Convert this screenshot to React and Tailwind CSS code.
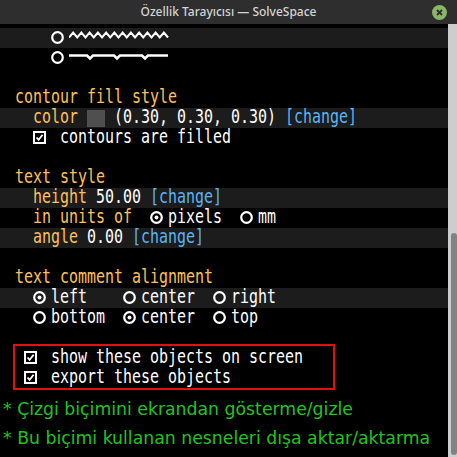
import React from "react";

const C = 9;
const OR = "text-[#ffc05a]";
const WH = "text-[#ffffff]";
const BL = "text-[#5ab4f5]";

function T({ t, c }) {
  return (
    <div className="h-[20px] shrink-0" style={{ width: t.length * C }}>
      <div
        className={`origin-left scale-x-[0.787] whitespace-pre leading-[17px] text-[19px] font-['DejaVu_Sans_Mono',monospace] ${c}`}
      >
        {t}
      </div>
    </div>
  );
}

function Sp({ n }) {
  return <div className="h-[20px] shrink-0" style={{ width: n * C }} />;
}

function Radio({ on }) {
  return (
    <div className="w-[18px] h-[20px] shrink-0 flex items-center">
      <svg width="13" height="13" viewBox="0 0 13 13" className="-mt-[1px]">
        <circle cx="6.5" cy="6.5" r="5.3" fill="none" stroke="#fff" strokeWidth="2.2" />
        {on && <circle cx="6.5" cy="6.5" r="2" fill="#fff" />}
      </svg>
    </div>
  );
}

function Check() {
  return (
    <div className="w-[18px] h-[20px] shrink-0 flex items-center">
      <svg width="13" height="13" viewBox="0 0 13 13" className="-mt-[1px]">
        <rect x="1" y="1" width="11" height="11" fill="none" stroke="#fff" strokeWidth="2" />
        <path d="M3.5 6.5 L5.6 8.8 L9.6 3.8" fill="none" stroke="#fff" strokeWidth="1.8" />
      </svg>
    </div>
  );
}

function Row({ hl, children }) {
  return (
    <div className={`flex items-start h-[20px] pl-[6px] ${hl ? "bg-[#1c1c1c]" : ""}`}>{children}</div>
  );
}

function Zig() {
  const pts = [];
  const n = 24;
  for (let i = 0; i <= n; i++) {
    pts.push(`${(i * 99) / n},${i % 2 === 0 ? 9.5 : 4.5}`);
  }
  return (
    <svg width="100" height="20" viewBox="0 0 100 20" className="shrink-0">
      <polyline points={pts.join(" ")} fill="none" stroke="#fff" strokeWidth="2" />
    </svg>
  );
}

function Dash() {
  return (
    <svg width="100" height="20" viewBox="0 0 100 20" className="shrink-0">
      <path
        d="M0 7.5 H18 L21 10.5 L24 7.5 H45 L48 10.5 L51 7.5 H73 L76 10.5 L79 7.5 H99"
        fill="none"
        stroke="#fff"
        strokeWidth="2.6"
      />
    </svg>
  );
}

export default function App() {
  return (
    <div className="w-[457px] h-[457px] flex flex-col overflow-hidden bg-black">
      <div className="relative h-[24px] shrink-0 bg-[#2e2e2e] flex items-center justify-center">
        <span className="text-[12px] font-medium text-[#d4d4d4] font-['Noto_Sans',sans-serif]">
          Özellik Tarayıcısı — SolveSpace
        </span>
        <div className="absolute right-[10px] top-[5px] w-[15px] h-[15px] rounded-full bg-[#8ab66a] flex items-center justify-center">
          <svg width="7" height="7" viewBox="0 0 7 7">
            <path d="M1 1 L6 6 M6 1 L1 6" stroke="#2e2e2e" strokeWidth="1.8" />
          </svg>
        </div>
      </div>
      <div className="flex-1 flex min-h-0">
        <div className="flex-1 bg-black pt-[4px] flex flex-col">
          <Row hl>
            <Sp n={5} />
            <Radio />
            <Zig />
          </Row>
          <Row>
            <Sp n={5} />
            <Radio />
            <Dash />
          </Row>
          <Row />
          <Row>
            <Sp n={1} />
            <T t="contour fill style" c={OR} />
          </Row>
          <Row hl>
            <Sp n={3} />
            <T t="color " c={OR} />
            <div className="w-[18px] h-[20px] shrink-0 flex items-center">
              <div className="w-[18px] h-[17px] bg-[#4f4f4f]" />
            </div>
            <Sp n={1} />
            <T t="(0.30, 0.30, 0.30) " c={WH} />
            <T t="[change]" c={BL} />
          </Row>
          <Row>
            <Sp n={3} />
            <Check />
            <Sp n={1} />
            <T t="contours are filled" c={WH} />
          </Row>
          <Row />
          <Row>
            <Sp n={1} />
            <T t="text style" c={OR} />
          </Row>
          <Row hl>
            <Sp n={3} />
            <T t="height " c={OR} />
            <T t="50.00 " c={WH} />
            <T t="[change]" c={BL} />
          </Row>
          <Row>
            <Sp n={3} />
            <T t="in units of  " c={OR} />
            <Radio on />
            <T t="pixels  " c={WH} />
            <Radio />
            <T t="mm" c={WH} />
          </Row>
          <Row hl>
            <Sp n={3} />
            <T t="angle " c={OR} />
            <T t="0.00 " c={WH} />
            <T t="[change]" c={BL} />
          </Row>
          <Row />
          <Row>
            <Sp n={1} />
            <T t="text comment alignment" c={OR} />
          </Row>
          <Row hl>
            <Sp n={3} />
            <Radio on />
            <T t="left    " c={WH} />
            <Radio />
            <T t="center  " c={WH} />
            <Radio />
            <T t="right" c={WH} />
          </Row>
          <Row>
            <Sp n={3} />
            <Radio />
            <T t="bottom  " c={WH} />
            <Radio on />
            <T t="center  " c={WH} />
            <Radio />
            <T t="top" c={WH} />
          </Row>
          <Row />
          <div className="relative">
            <Row>
              <Sp n={2} />
              <Check />
              <Sp n={1} />
              <T t="show these objects on screen" c={WH} />
            </Row>
            <Row>
              <Sp n={2} />
              <Check />
              <Sp n={1} />
              <T t="export these objects" c={WH} />
            </Row>
            <div className="absolute left-[13px] top-[-4px] w-[322px] h-[46px] border-2 border-[#e41010]" />
          </div>
          <div className="mt-[6px] pl-[3px] text-[#20c420] font-['DejaVu_Sans',sans-serif] text-[18px]">
            <div className="h-[29px] leading-[29px] whitespace-pre origin-left scale-x-[0.96]">
              * Çizgi biçimini ekrandan gösterme/gizle
            </div>
            <div className="h-[29px] leading-[29px] whitespace-pre origin-left scale-x-[0.96]">
              * Bu biçimi kullanan nesneleri dışa aktar/aktarma
            </div>
          </div>
        </div>
        <div className="w-[12px] shrink-0 bg-[#cdcdcd] flex flex-col pt-[209px] pb-[2px] px-[3px]">
          <div className="flex-1 rounded-full bg-[#7f8383]" />
        </div>
      </div>
    </div>
  );
}
